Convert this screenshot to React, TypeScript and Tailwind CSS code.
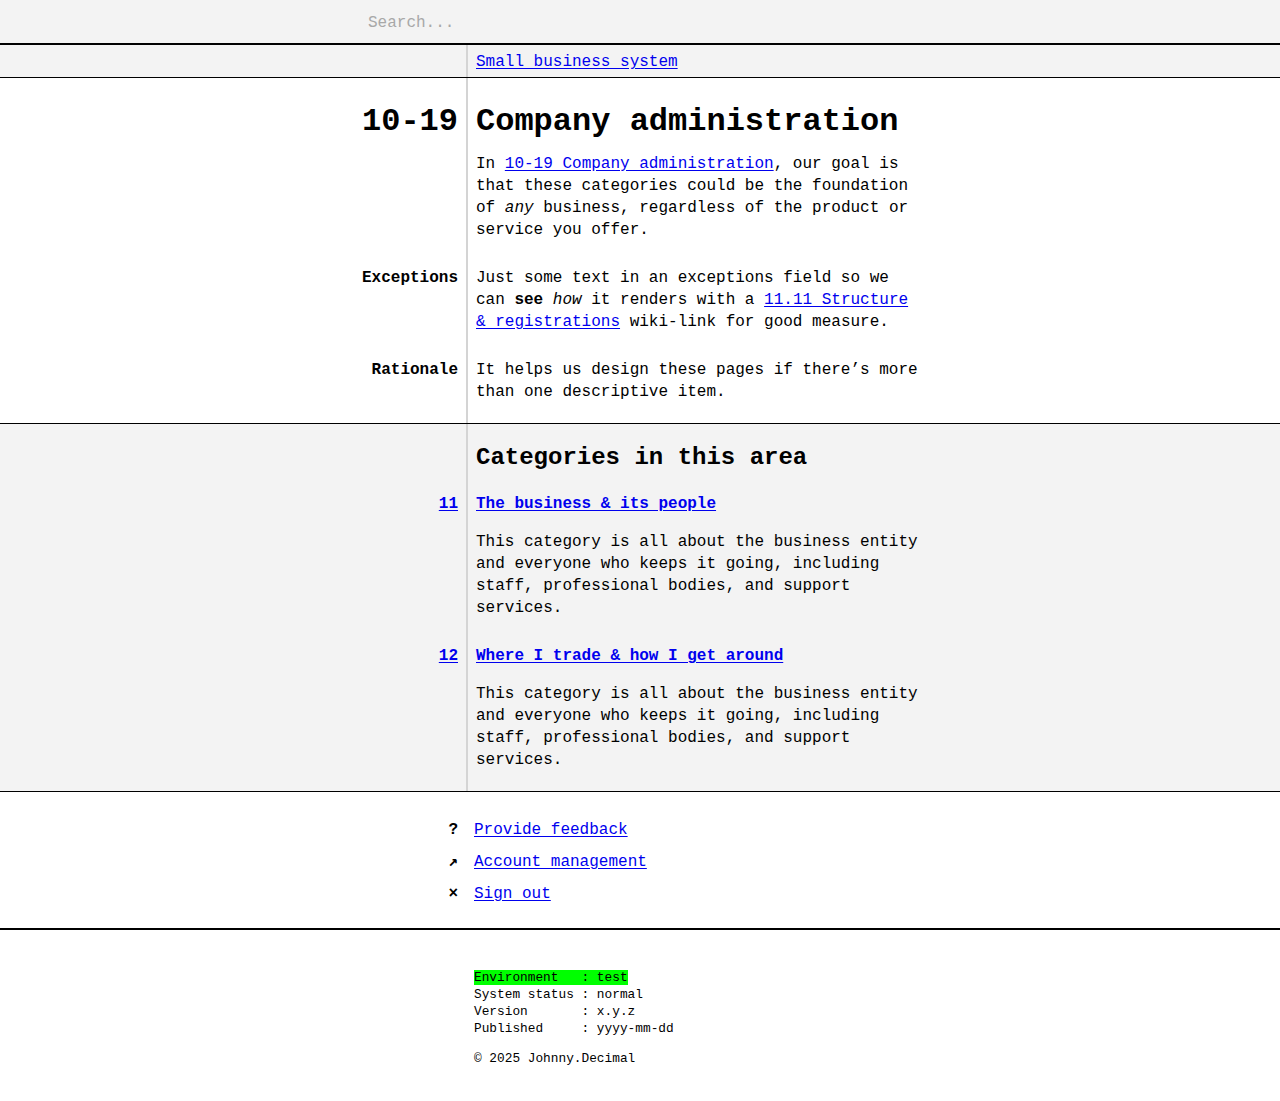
import React from "react";

const mono = "font-['Liberation_Mono',monospace]";

function Cell({
  left,
  children,
  className = "",
}: {
  left?: React.ReactNode;
  children?: React.ReactNode;
  className?: string;
}) {
  return (
    <>
      <div className={`border-r-2 border-[#d4d4d4] pr-2 text-right ${className}`}>{left}</div>
      <div className={`pl-2 ${className}`}>
        <div className="w-[446px]">{children}</div>
      </div>
    </>
  );
}

const link = "text-[#0000ee] underline underline-offset-2";

export default function App() {
  return (
    <div className={`${mono} text-[16px] leading-[22px] text-black bg-white`}>
      {/* Search */}
      <div className="bg-[#f3f3f3] border-b-2 border-black">
        <input
          placeholder="Search..."
          className="h-[43px] w-full bg-transparent pl-[368px] pt-[2px] outline-none placeholder:text-[#a8a8a8]"
        />
      </div>

      {/* Breadcrumb */}
      <div className="grid grid-cols-[468px_1fr] bg-[#f3f3f3] border-b border-black">
        <Cell className="pt-[6px] pb-[4px]">
          <a href="#" className={link}>
            Small business system
          </a>
        </Cell>
      </div>

      {/* Area header */}
      <div className="grid grid-cols-[468px_1fr] border-b border-black">
        <Cell
          className="pt-[24px]"
          left={<span className="text-[32px] leading-[40px] font-bold">10-19</span>}
        >
          <h1 className="text-[32px] leading-[40px] font-bold">Company administration</h1>
          <p className="mt-[11px]">
            In{" "}
            <a href="#" className={link}>
              10-19 Company administration
            </a>
            , our goal is that these categories could be the foundation of <em>any</em> business,
            regardless of the product or service you offer.
          </p>
        </Cell>
        <Cell className="pt-[26px]" left={<span className="font-bold">Exceptions</span>}>
          <p>
            Just some text in an exceptions field so we can <strong>see</strong> <em>how</em> it
            renders with a{" "}
            <a href="#" className={link}>
              11.11 Structure &amp; registrations
            </a>{" "}
            wiki-link for good measure.
          </p>
        </Cell>
        <Cell className="pt-[26px] pb-[20px]" left={<span className="font-bold">Rationale</span>}>
          <p>It helps us design these pages if there’s more than one descriptive item.</p>
        </Cell>
      </div>

      {/* Categories */}
      <div className="grid grid-cols-[468px_1fr] bg-[#f3f3f3] border-b border-black">
        <Cell className="pt-[18px]">
          <h2 className="text-[24px] leading-8 font-bold">Categories in this area</h2>
        </Cell>
        <Cell
          className="pt-[19px]"
          left={
            <a href="#" className={`${link} font-bold`}>
              11
            </a>
          }
        >
          <a href="#" className={`${link} font-bold`}>
            The business &amp; its people
          </a>
          <p className="mt-4">
            This category is all about the business entity and everyone who keeps it going,
            including staff, professional bodies, and support services.
          </p>
        </Cell>
        <Cell
          className="pt-[26px] pb-[20px]"
          left={
            <a href="#" className={`${link} font-bold`}>
              12
            </a>
          }
        >
          <a href="#" className={`${link} font-bold`}>
            Where I trade &amp; how I get around
          </a>
          <p className="mt-4">
            This category is all about the business entity and everyone who keeps it going,
            including staff, professional bodies, and support services.
          </p>
        </Cell>
      </div>

      {/* Footer links */}
      <div className="border-b-2 border-black pt-[27px] pb-[23px]">
        <ul className="flex flex-col gap-[10px]">
          {[
            { icon: "?", label: "Provide feedback" },
            { icon: "↗", label: "Account management" },
            { icon: "×", label: "Sign out" },
          ].map((item) => (
            <li key={item.label} className="grid grid-cols-[466px_1fr]">
              <span className="pr-2 text-right font-bold">{item.icon}</span>
              <a href="#" className={`${link} pl-2`}>
                {item.label}
              </a>
            </li>
          ))}
        </ul>
      </div>

      {/* Meta */}
      <div className="pl-[474px] pt-[39px] pb-[34px] text-[12.8px] leading-[17px]">
        <pre className={mono}>
          <span className="bg-[#00ff00]">Environment   : test</span>
          {"\nSystem status : normal\nVersion       : x.y.z\nPublished     : yyyy-mm-dd"}
        </pre>
        <p className="mt-[13px]">© 2025 Johnny.Decimal</p>
      </div>
    </div>
  );
}
